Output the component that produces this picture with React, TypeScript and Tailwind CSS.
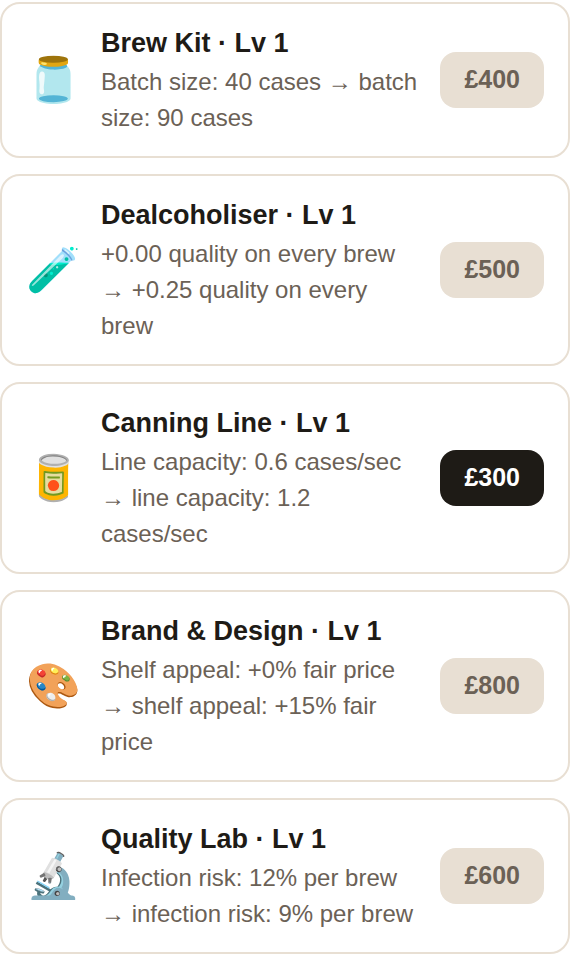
import React from "react";

type Upgrade = { icon: string; name: string; level: number; effect: string; price: number; affordable?: boolean };

const upgrades: Upgrade[] = [
  { icon: "🫙", name: "Brew Kit", level: 1, effect: "Batch size: 40 cases → batch size: 90 cases", price: 400 },
  { icon: "🧪", name: "Dealcoholiser", level: 1, effect: "+0.00 quality on every brew → +0.25 quality on every brew", price: 500 },
  { icon: "🥫", name: "Canning Line", level: 1, effect: "Line capacity: 0.6 cases/sec → line capacity: 1.2 cases/sec", price: 300, affordable: true },
  { icon: "🎨", name: "Brand & Design", level: 1, effect: "Shelf appeal: +0% fair price → shelf appeal: +15% fair price", price: 800 },
  { icon: "🔬", name: "Quality Lab", level: 1, effect: "Infection risk: 12% per brew → infection risk: 9% per brew", price: 600 },
];

const UpgradeCard = ({ upgrade }: { upgrade: Upgrade }) => (
  <li className="flex items-center gap-5 rounded-[20px] border-2 border-[#e8dfd3] bg-white px-6 py-5">
    <span className="w-[55px] shrink-0 text-center text-[44px] leading-[52px]" aria-hidden="true">{upgrade.icon}</span>
    <div className="min-w-0 flex-1">
      <h2 className="text-[27px] leading-[38px] font-bold text-[#1e1b16]">{upgrade.name} · Lv {upgrade.level}</h2>
      <p className="mt-0.5 text-2xl leading-9 text-[#6b6156]">{upgrade.effect}</p>
    </div>
    <button
      type="button"
      disabled={!upgrade.affordable}
      className="h-14 shrink-0 rounded-2xl bg-[#1e1b16] px-6 text-[25px] font-bold text-white disabled:bg-[#e8dfd3] disabled:text-[#6b6156]"
    >
      £{upgrade.price}
    </button>
  </li>
);

export default function App() {
  return (
    <ul className="flex flex-col gap-4 bg-white pt-0.5 font-['Liberation_Sans',Arial,sans-serif]">
      {upgrades.map((upgrade) => (
        <UpgradeCard key={upgrade.name} upgrade={upgrade} />
      ))}
    </ul>
  );
}
